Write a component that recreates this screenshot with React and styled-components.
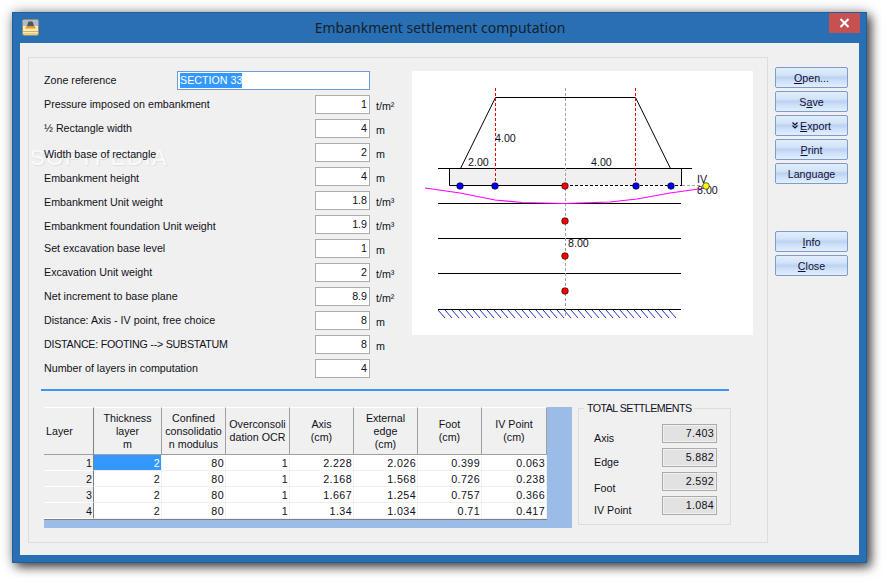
import React from "react";
import styled, { createGlobalStyle } from "styled-components";

const GlobalStyle = createGlobalStyle`
  html, body {
    margin: 0;
    padding: 0;
    background: #fff;
  }
  body {
    font-family: "Liberation Sans", "Noto Sans", sans-serif;
    font-size: 10.7px;
    color: #101020;
  }
`;

const Desktop = styled.div`
  width: 887px;
  height: 583px;
  padding: 12px 0 0 12px;
  box-sizing: border-box;
  overflow: hidden;
`;

const Win = styled.div`
  width: 855px;
  height: 551px;
  box-sizing: border-box;
  background: #2870b3;
  border: 1px solid #1f5f9c;
  box-shadow: 4px 4px 10px rgba(0, 0, 0, 0.7), 0 0 12px rgba(0, 0, 0, 0.25);
  display: flex;
  flex-direction: column;
  padding: 0 7px 7px 7px;
`;

const TitleBar = styled.div`
  height: 30px;
  flex: none;
  margin-right: -1px;
  display: grid;
  grid-template-columns: 1fr auto 1fr;
  align-items: start;
`;

const AppIcon = styled.svg`
  width: 17px;
  height: 17px;
  margin: 6px 0 0 2px;
`;

const Title = styled.div`
  font-family: "Noto Sans", "Liberation Sans", sans-serif;
  font-size: 14px;
  color: #15202c;
  line-height: 30px;
`;

const CloseBtn = styled.div`
  justify-self: end;
  width: 31px;
  height: 20px;
  background: #c75050;
  display: flex;
  align-items: center;
  justify-content: center;
`;

const Client = styled.div`
  flex: 1;
  background: #f0f0f0;
  display: flex;
  gap: 7px;
  padding: 14px 11px 12px 8px;
`;

const MainGroup = styled.div`
  position: relative;
  width: 740px;
  box-sizing: border-box;
  border: 1px solid #dcdcdc;
  padding: 13px 0 0 15px;
  display: flex;
  flex-direction: column;
`;

const Watermark = styled.div`
  position: absolute;
  left: 1px;
  top: 87px;
  font-size: 22px;
  letter-spacing: 1.5px;
  color: #fbfbfb;
  text-shadow: 1px 1px 1px #dedede;
  pointer-events: none;
`;

const TopArea = styled.div`
  display: flex;
  gap: 42px;
`;

const Form = styled.div`
  width: 326px;
  display: flex;
  flex-direction: column;
  gap: 5px;
`;

const Row = styled.div`
  display: flex;
  align-items: center;
  height: 19px;
`;

const Label = styled.div`
  flex: 1;
  white-space: nowrap;
  position: relative;
  top: ${(p) => (p.$nudge || 0) - 1}px;
  letter-spacing: ${(p) => (p.$tight ? "-0.25px" : "normal")};
`;

const ZoneInput = styled.div`
  width: 193px;
  height: 19px;
  box-sizing: border-box;
  border: 1px solid #6c9cd4;
  background: #fff;
  padding: 1px 2px;
  line-height: 15px;
  & > span {
    background: #3399ff;
    color: #fff;
    display: inline-block;
  }
`;

const NumInput = styled.div`
  width: 55px;
  height: 19px;
  box-sizing: border-box;
  border: 1px solid #ababab;
  background: #fff;
  text-align: right;
  padding: 0 2px;
  line-height: 17px;
`;

const Unit = styled.div`
  width: 30px;
  margin-right: -30px;
  padding: 5px 0 0 6px;
  box-sizing: border-box;
  flex: none;
`;

const Field = styled.div`
  display: flex;
`;

const Drawing = styled.svg`
  width: 341px;
  height: 264px;
  background: #fff;
  display: block;
  flex: none;
`;

const Divider = styled.div`
  width: 688px;
  height: 2px;
  margin: 11px 0 0 -3px;
  background: #3c96f0;
  flex: none;
`;

const BottomArea = styled.div`
  display: flex;
  gap: 6px;
  margin-top: 16px;
`;

const TableBack = styled.div`
  width: 528px;
  height: 121px;
  background: #9cbce8;
  flex: none;
`;

const Table = styled.div`
  width: 503px;
  display: grid;
  grid-template-columns: 50px 68px 64px 64px 64px 64px 64px 65px;
  grid-auto-rows: 16px;
  grid-template-rows: 48px;
  background: #fff;
  border-right: 1px solid #808080;
  border-bottom: 1px solid #808080;
  box-sizing: border-box;
  line-height: 13px;
`;

const HeadCell = styled.div`
  background: #f0f0f0;
  border-top: 1px solid #fff;
  border-right: 1px solid ${(p) => (p.$fixed ? "#808080" : "#a0a0a0")};
  border-bottom: 1px solid #a0a0a0;
  box-sizing: border-box;
  display: flex;
  align-items: center;
  justify-content: ${(p) => (p.$left ? "flex-start" : "center")};
  text-align: center;
  padding: 0 ${(p) => (p.$left ? "2px" : "0")};
  white-space: pre-line;
`;

const RowHead = styled.div`
  background: #f0f0f0;
  border-right: 1px solid #808080;
  border-bottom: 1px solid #fff;
  box-sizing: border-box;
  text-align: right;
  padding-right: 1px;
  line-height: 16px;
`;

const Cell = styled.div`
  background: ${(p) => (p.$active ? "#3399ff" : "#fff")};
  color: ${(p) => (p.$active ? "#fff" : "inherit")};
  border-right: 1px solid #f0f0f0;
  border-bottom: 1px solid #f0f0f0;
  box-sizing: border-box;
  text-align: right;
  padding-right: 1px;
  letter-spacing: 0.4px;
  line-height: 16px;
`;

const TotalsBox = styled.fieldset`
  width: 153px;
  height: 123px;
  box-sizing: border-box;
  margin: -5px 0 0 0;
  padding: 0;
  border: 1px solid #dcdcdc;
  display: flex;
  flex-direction: column;
`;

const TotalsLegend = styled.legend`
  margin-left: 5px;
  padding: 0 3px 0 3px;
  line-height: 13px;
  letter-spacing: -0.55px;
`;

const TotalsList = styled.div`
  display: flex;
  flex-direction: column;
  gap: 5px;
  padding: 9px 0 0 15px;
`;

const TotalRow = styled.div`
  display: flex;
  align-items: center;
  height: 19px;
`;

const TotalLabel = styled.div`
  width: 68px;
  position: relative;
  top: ${(p) => p.$nudge || 0}px;
`;

const TotalValue = styled.div`
  width: 55px;
  height: 19px;
  box-sizing: border-box;
  border: 1px solid #ababab;
  background: #e2e2e2;
  box-shadow: inset 0 0 0 1px #f0f0f0;
  text-align: right;
  padding: 0 2px;
  letter-spacing: 0.3px;
  line-height: 16px;
`;

const Sidebar = styled.div`
  display: flex;
  flex-direction: column;
  gap: 3px;
  padding-top: 10px;
`;

const Btn = styled.div`
  width: 73px;
  height: 21px;
  box-sizing: border-box;
  border: 1px solid #7c9ccc;
  border-radius: 2px;
  background: linear-gradient(#e2eefc 0%, #d3e3f9 35%, #bdd3f1 50%, #cfe1f9 70%, #e0eefe 100%);
  display: flex;
  align-items: center;
  justify-content: center;
  margin-top: ${(p) => p.$gap || 0}px;
  color: #10103a;
  & > span > u {
    text-underline-offset: 1px;
  }
`;

const ExportMark = styled.svg`
  width: 6px;
  height: 7px;
  margin-right: 2px;
  flex: none;
`;

const fields = [
  { label: "Pressure imposed on embankment", value: "1", unit: "t/m²" },
  { label: "½ Rectangle width", value: "4", unit: "m" },
  { label: "Width base of rectangle", value: "2", unit: "m", nudge: 2 },
  { label: "Embankment height", value: "4", unit: "m", nudge: 2 },
  { label: "Embankment Unit weight", value: "1.8", unit: "t/m³", nudge: 2 },
  { label: "Embankment foundation Unit weight", value: "1.9", unit: "t/m³", nudge: 2 },
  { label: "Set excavation base level", value: "1", unit: "m" },
  { label: "Excavation Unit weight", value: "2", unit: "t/m³" },
  { label: "Net increment to base plane", value: "8.9", unit: "t/m²" },
  { label: "Distance: Axis - IV point, free choice", value: "8", unit: "m" },
  { label: "DISTANCE: FOOTING --> SUBSTATUM", value: "8", unit: "m", tight: true },
  { label: "Number of layers in computation", value: "4", unit: "" },
];

const headers = [
  "Layer",
  "Thickness\nlayer\nm",
  "Confined\nconsolidatio\nn modulus",
  "Overconsoli\ndation OCR",
  "Axis\n(cm)",
  "External\nedge\n(cm)",
  "Foot\n(cm)",
  "IV Point\n(cm)",
];

const rows = [
  ["1", "2", "80", "1", "2.228", "2.026", "0.399", "0.063"],
  ["2", "2", "80", "1", "2.168", "1.568", "0.726", "0.238"],
  ["3", "2", "80", "1", "1.667", "1.254", "0.757", "0.366"],
  ["4", "2", "80", "1", "1.34", "1.034", "0.71", "0.417"],
];

const totals = [
  { label: "Axis", value: "7.403", nudge: 4 },
  { label: "Edge", value: "5.882", nudge: 4 },
  { label: "Foot", value: "2.592", nudge: 6 },
  { label: "IV Point", value: "1.084", nudge: 4 },
];

function SectionDrawing() {
  const hatch = [];
  for (let x = 26; x < 264; x += 7) {
    hatch.push(<line key={x} x1={x} y1={239} x2={x + 7} y2={247} stroke="#1a2fd0" strokeWidth="1" />);
  }
  const dots = [
    [48, 115, "#0000f0"],
    [83, 115, "#0000f0"],
    [224, 115, "#0000f0"],
    [259, 115, "#0000f0"],
    [153, 115, "#ff0000"],
    [153, 150, "#ff0000"],
    [153, 185, "#ff0000"],
    [153, 220, "#ff0000"],
    [294, 115, "#ffff00"],
  ];
  const labels = [
    [83, 71, "4.00"],
    [56, 95, "2.00"],
    [179, 95, "4.00"],
    [285, 112, "IV"],
    [285, 123, "8.00"],
    [156, 176, "8.00"],
  ];
  return (
    <Drawing viewBox="0 0 341 264">
      <rect x="37.5" y="97.5" width="232" height="17" fill="#f0f0f0" />
      <g stroke="#000" fill="none" strokeWidth="1">
        <polyline points="48.5,97.5 83.5,26.5 223.5,26.5 258.5,97.5" />
        <line x1="26" y1="97.5" x2="280" y2="97.5" />
        <polyline points="269.5,97.5 269.5,114.5" />
        <polyline points="153,114.5 37.5,114.5 37.5,97.5" />
        <line x1="153" y1="114.5" x2="270" y2="114.5" strokeDasharray="3 2" />
        <line x1="26" y1="132.5" x2="269" y2="132.5" />
        <line x1="26" y1="167.5" x2="269" y2="167.5" />
        <line x1="26" y1="202.5" x2="269" y2="202.5" />
        <line x1="26" y1="238.5" x2="269" y2="238.5" />
      </g>
      {hatch}
      <g fill="none" strokeWidth="1" strokeDasharray="3 2">
        <line x1="83.5" y1="17" x2="83.5" y2="114" stroke="#f00000" />
        <line x1="223.5" y1="17" x2="223.5" y2="114" stroke="#f00000" />
        <line x1="153.5" y1="17" x2="153.5" y2="247" stroke="#a0a0a0" />
        <line x1="270" y1="114.5" x2="294" y2="114.5" stroke="#a0a0a0" />
      </g>
      <polyline
        points="13,117 48,122 83,129 110,131.5 153,132.5 198,131 225,128 258,122 294,117"
        fill="none"
        stroke="#ff00ff"
        strokeWidth="1.2"
      />
      {labels.map(([x, y, text]) => (
        <text key={`${x}-${y}`} x={x} y={y} fontSize="10.7" fill="#101020" fontFamily="Liberation Sans, sans-serif">
          {text}
        </text>
      ))}
      {dots.map(([cx, cy, fill]) => (
        <circle key={`${cx}-${cy}`} cx={cx} cy={cy} r="3.3" fill={fill} stroke="#000" strokeWidth="0.6" />
      ))}
    </Drawing>
  );
}

export default function App() {
  return (
    <Desktop>
      <GlobalStyle />
      <Win>
        <TitleBar>
          <AppIcon viewBox="0 0 17 17">
            <rect x="0.5" y="0.5" width="16" height="16" rx="2" fill="#f6ecc4" stroke="#9a8c68" />
            <rect x="1" y="1" width="15" height="6" fill="#aebbd0" />
            <path d="M5 7 L6.2 3 Q8.5 1.5 10.8 3 L12 7 Z" fill="#555" />
            <path d="M3 9.5 L4.5 7 H12.5 L14 9.5 Z" fill="#d8a020" />
            <rect x="1" y="12" width="15" height="1" fill="#d8b050" />
            <rect x="1" y="14.5" width="15" height="1" fill="#d8b050" />
          </AppIcon>
          <Title>Embankment settlement computation</Title>
          <CloseBtn>
            <svg width="11" height="10" viewBox="0 0 11 10">
              <path d="M1.5 1 L9.5 9 M9.5 1 L1.5 9" stroke="#fff" strokeWidth="2" />
            </svg>
          </CloseBtn>
        </TitleBar>
        <Client>
          <MainGroup>
            <Watermark>SOFTPEDIA</Watermark>
            <TopArea>
              <Form>
                <Row>
                  <Label>Zone reference</Label>
                  <ZoneInput>
                    <span>SECTION 33</span>
                  </ZoneInput>
                </Row>
                {fields.map((f) => (
                  <Row key={f.label}>
                    <Label $nudge={f.nudge} $tight={f.tight}>{f.label}</Label>
                    <Field>
                      <NumInput>{f.value}</NumInput>
                      <Unit>{f.unit}</Unit>
                    </Field>
                  </Row>
                ))}
              </Form>
              <SectionDrawing />
            </TopArea>
            <Divider />
            <BottomArea>
              <TableBack>
                <Table>
                  {headers.map((h, i) => (
                    <HeadCell key={h} $left={i === 0} $fixed={i === 0}>
                      {h}
                    </HeadCell>
                  ))}
                  {rows.map((r) =>
                    r.map((v, i) =>
                      i === 0 ? (
                        <RowHead key={`h${v}`}>{v}</RowHead>
                      ) : (
                        <Cell key={`${r[0]}-${i}`} $active={r[0] === "1" && i === 1}>
                          {v}
                        </Cell>
                      )
                    )
                  )}
                </Table>
              </TableBack>
              <TotalsBox>
                <TotalsLegend>TOTAL SETTLEMENTS</TotalsLegend>
                <TotalsList>
                  {totals.map((t) => (
                    <TotalRow key={t.label}>
                      <TotalLabel $nudge={t.nudge}>{t.label}</TotalLabel>
                      <TotalValue>{t.value}</TotalValue>
                    </TotalRow>
                  ))}
                </TotalsList>
              </TotalsBox>
            </BottomArea>
          </MainGroup>
          <Sidebar>
            <Btn>
              <span><u>O</u>pen...</span>
            </Btn>
            <Btn>
              <span>S<u>a</u>ve</span>
            </Btn>
            <Btn>
              <ExportMark viewBox="0 0 6 7">
                <path d="M0.5 0.5 L3 3 L5.5 0.5 M0.5 3.5 L3 6 L5.5 3.5" fill="none" stroke="#101030" strokeWidth="1.2" />
              </ExportMark>
              <span><u>E</u>xport</span>
            </Btn>
            <Btn>
              <span><u>P</u>rint</span>
            </Btn>
            <Btn>Language</Btn>
            <Btn $gap={44}>
              <span><u>I</u>nfo</span>
            </Btn>
            <Btn>
              <span><u>C</u>lose</span>
            </Btn>
          </Sidebar>
        </Client>
      </Win>
    </Desktop>
  );
}
